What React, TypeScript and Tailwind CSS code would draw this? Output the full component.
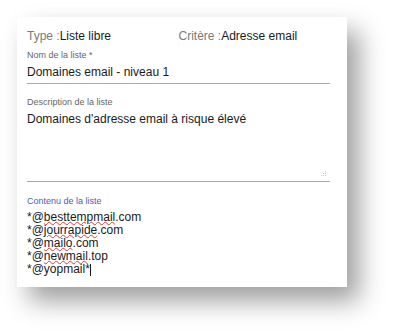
import React from "react";

const emails: { name: string; tail: string }[] = [
  { name: "besttempmail", tail: ".com" },
  { name: "jourrapide", tail: ".com" },
  { name: "mailo", tail: ".com" },
  { name: "newmail", tail: ".top" },
];

export default function App() {
  return (
    <div className="min-h-[335px] w-[395px] bg-white font-['Liberation_Sans',Arial,sans-serif]">
      <div className="pt-[17px] pl-[17px]">
        {/* CARD */}
        <div className="w-[330px] h-[270px] bg-white shadow-[12px_14px_24px_rgba(0,0,0,0.38)] pl-[10px] pr-[17px] pt-[12px]">
          {/* HEADER */}
          <div className="grid grid-cols-2 text-[12px] leading-[14px]">
            <div>
              <span className="text-[#7a7a7a]">Type :</span>
              <span className="text-[#1a1a1a]">Liste libre</span>
            </div>
            <div>
              <span className="text-[#7a7a7a]">Critère :</span>
              <span className="text-[#1a1a1a]">Adresse email</span>
            </div>
          </div>

          {/* NOM */}
          <div className="mt-[7px] text-[9px] leading-[11px] text-[#666]">Nom de la liste *</div>
          <div className="mt-[4px] pb-[4px] border-b border-[#a8a8a8] text-[12px] leading-[14px] text-[#1a1a1a]">
            Domaines email - niveau 1
          </div>

          {/* DESCRIPTION */}
          <div className="mt-[13px] text-[9px] leading-[11px] text-[#666]">Description de la liste</div>
          <div className="relative mt-[4px] h-[70px] border-b border-[#a8a8a8] text-[12px] leading-[14px] text-[#1a1a1a]">
            Domaines d'adresse email à risque élevé
            {/* resize grip */}
            <svg className="absolute right-[3px] bottom-[4px]" width="6" height="6" viewBox="0 0 6 6">
              <rect x="4" y="0" width="1" height="1" fill="#c8c8c8" />
              <rect x="2" y="2" width="1" height="1" fill="#c8c8c8" />
              <rect x="4" y="2" width="1" height="1" fill="#c8c8c8" />
              <rect x="0" y="4" width="1" height="1" fill="#c8c8c8" />
              <rect x="2" y="4" width="1" height="1" fill="#c8c8c8" />
              <rect x="4" y="4" width="1" height="1" fill="#c8c8c8" />
            </svg>
          </div>

          {/* CONTENU */}
          <div className="mt-[14px] text-[9px] leading-[11px] text-[#4a5bc4]">Contenu de la liste</div>
          <div className="mt-[4px] text-[12px] leading-[13px] text-[#1a1a1a]">
            {emails.map((e) => (
              <div key={e.name}>
                *@
                <span className="underline decoration-wavy decoration-[#e53935] decoration-1 underline-offset-0">
                  {e.name}
                </span>
                {e.tail}
              </div>
            ))}
            <div className="flex items-center">
              *@yopmail*
              <span className="inline-block w-px h-[12px] bg-[#1a1a1a]" />
            </div>
          </div>
        </div>
      </div>
    </div>
  );
}
